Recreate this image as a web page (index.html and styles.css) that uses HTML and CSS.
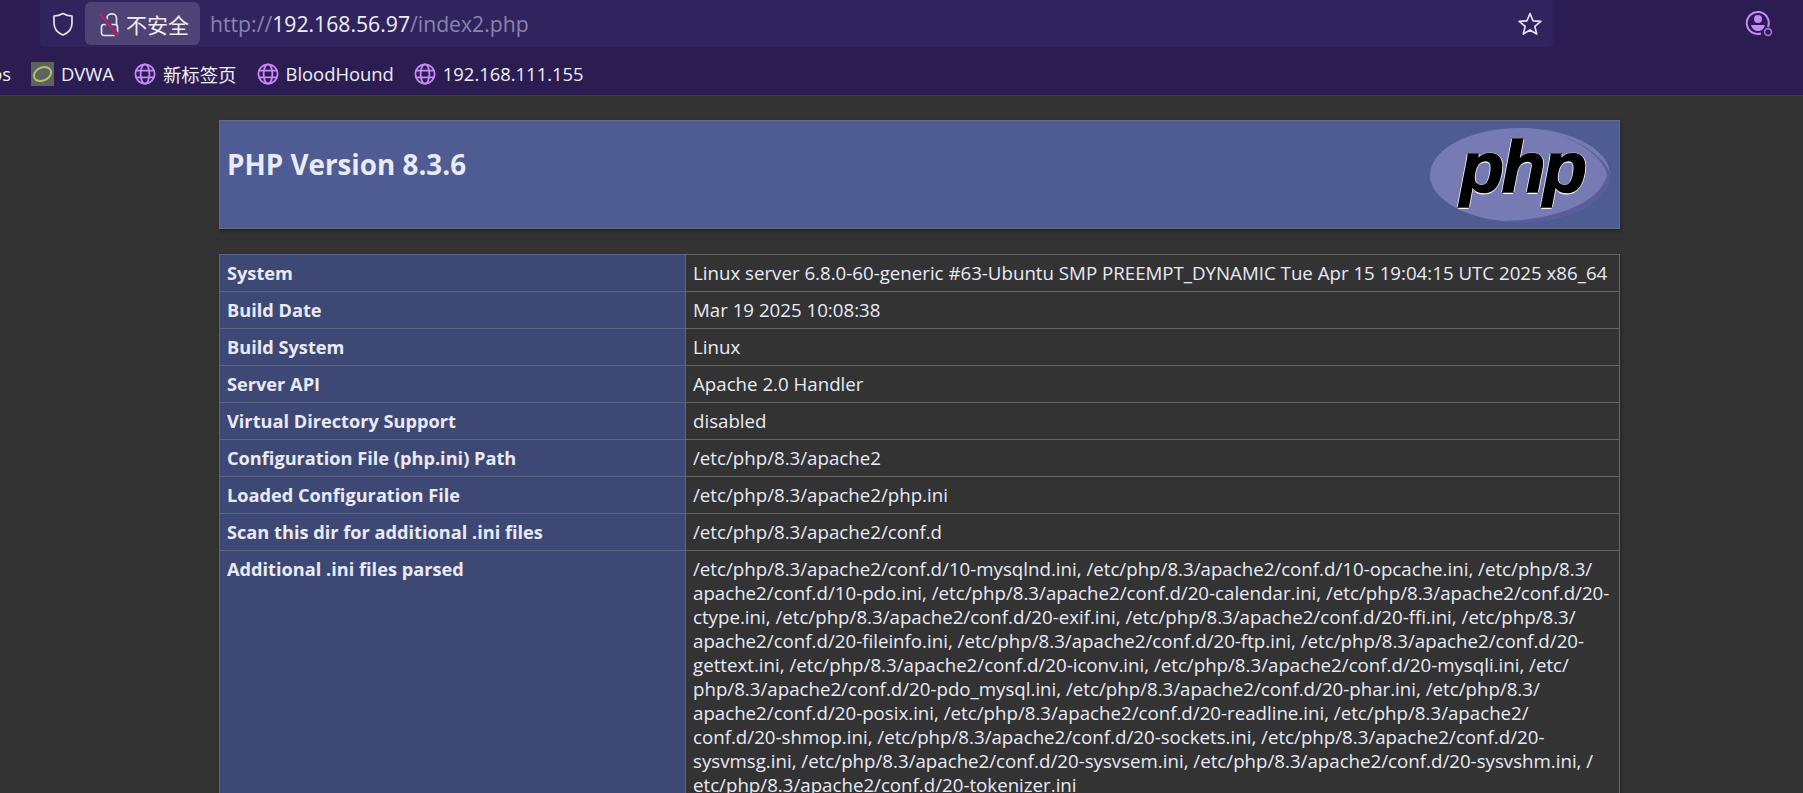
FILE: index.html
```html
<!DOCTYPE html>
<html lang="zh-CN">
<head>
  <meta charset="UTF-8" />
  <title>PHP 8.3.6 - phpinfo()</title>
  <link rel="stylesheet" href="styles.css">
</head>
<body>
  <div class="toolbar">
    <div class="nav-row">
      <div class="address">
        <svg class="shield" width="24" height="28" viewBox="0 0 24 28"><path d="M12 3.5 C14.5 5 18 6 21 6 V13 C21 19 17 23 12 25 C7 23 3 19 3 13 V6 C6 6 9.5 5 12 3.5 Z" fill="none" stroke="#e6e2f4" stroke-width="1.7" stroke-linejoin="round"/></svg>
        <div class="not-secure">
          <svg width="21" height="26" viewBox="0 0 21 26"><path d="M8 14 V7 C8 1.5 17.5 1.5 17.5 7 V14" fill="none" stroke="#e6e2f4" stroke-width="1.7"/><rect x="2.5" y="13.5" width="16" height="11" rx="2.5" fill="none" stroke="#e6e2f4" stroke-width="1.7"/><path d="M1 3 L19 25" stroke="#4f4375" stroke-width="4.5"/><path d="M1 3 L19 25" stroke="#e0144c" stroke-width="1.6"/></svg>
          <span>不安全</span>
        </div>
        <div class="url">http://<b>192.168.56.97</b>/index2.php</div>
        <svg class="star" width="26" height="26" viewBox="0 0 26 26"><path d="M13 2.5 L16 9.8 L23.8 10.4 L17.8 15.4 L19.7 23 L13 18.9 L6.3 23 L8.2 15.4 L2.2 10.4 L10 9.8 Z" fill="none" stroke="#e6e2f4" stroke-width="1.7" stroke-linejoin="round"/></svg>
      </div>
      <svg class="account" width="30" height="30" viewBox="0 0 30 30"><path d="M24 19 A11 11 0 1 0 17 25.5" fill="none" stroke="#c58af5" stroke-width="2"/><circle cx="14" cy="11" r="4" fill="#c58af5"/><path d="M7 17 H21 C20 21 17 23 14 23 C11 23 8 21 7 17 Z" fill="#c58af5"/><circle cx="24" cy="24" r="3.4" fill="none" stroke="#a774dd" stroke-width="1.6"/></svg>
    </div>
    <div class="bookmarks">
      <span class="cut">os</span>
      <span class="bm"><svg width="23" height="24" viewBox="0 0 23 24"><rect width="23" height="24" fill="#5d6360"/><ellipse cx="11.5" cy="12" rx="9" ry="6.5" transform="rotate(-25 11.5 12)" fill="none" stroke="#b4c06a" stroke-width="2"/></svg>DVWA</span>
      <span class="bm"><svg class="globe" width="22" height="22" viewBox="0 0 22 22"><use href="#globe"/></svg>新标签页</span>
      <span class="bm"><svg class="globe" width="22" height="22" viewBox="0 0 22 22"><use href="#globe"/></svg>BloodHound</span>
      <span class="bm"><svg class="globe" width="22" height="22" viewBox="0 0 22 22"><use href="#globe"/></svg>192.168.111.155</span>
    </div>
    <svg width="0" height="0" class="defs"><defs><g id="globe" fill="none" stroke="#c58af5" stroke-width="1.8"><circle cx="11" cy="11" r="9.6"/><ellipse cx="11" cy="11" rx="4.4" ry="9.6"/><path d="M2 7.6 H20 M2 14.4 H20"/></g></defs></svg>
  </div>

  <div class="center">
    <div class="php-head">
      <div class="php-logo">
        <svg width="180" height="96" viewBox="0 0 180 96"><ellipse cx="90" cy="48" rx="90" ry="47" fill="#777bb3"/><path d="M128 7 C160 18 180 38 180 48 C180 74 140 95 90 95 C84 95 79 95 74 94 C120 93 170 78 177 48 C175 32 150 15 128 7 Z" fill="#5a5c9c"/></svg>
        <span class="php-word">php</span>
      </div>
      <h1>PHP Version 8.3.6</h1>
    </div>

    <table>
      <tr><td class="e">System</td><td class="v">Linux server 6.8.0-60-generic #63-Ubuntu SMP PREEMPT_DYNAMIC Tue Apr 15 19:04:15 UTC 2025 x86_64</td></tr>
      <tr><td class="e">Build Date</td><td class="v">Mar 19 2025 10:08:38</td></tr>
      <tr><td class="e">Build System</td><td class="v">Linux</td></tr>
      <tr><td class="e">Server API</td><td class="v">Apache 2.0 Handler</td></tr>
      <tr><td class="e">Virtual Directory Support</td><td class="v">disabled</td></tr>
      <tr><td class="e">Configuration File (php.ini) Path</td><td class="v">/etc/php/8.3/apache2</td></tr>
      <tr><td class="e">Loaded Configuration File</td><td class="v">/etc/php/8.3/apache2/php.ini</td></tr>
      <tr><td class="e">Scan this dir for additional .ini files</td><td class="v">/etc/php/8.3/apache2/conf.d</td></tr>
      <tr><td class="e">Additional .ini files parsed</td><td class="v">/etc/php/8.3/apache2/conf.d/10-mysqlnd.ini, /etc/php/8.3/apache2/conf.d/10-opcache.ini, /etc/php/8.3/<br>apache2/conf.d/10-pdo.ini, /etc/php/8.3/apache2/conf.d/20-calendar.ini, /etc/php/8.3/apache2/conf.d/20-<br>ctype.ini, /etc/php/8.3/apache2/conf.d/20-exif.ini, /etc/php/8.3/apache2/conf.d/20-ffi.ini, /etc/php/8.3/<br>apache2/conf.d/20-fileinfo.ini, /etc/php/8.3/apache2/conf.d/20-ftp.ini, /etc/php/8.3/apache2/conf.d/20-<br>gettext.ini, /etc/php/8.3/apache2/conf.d/20-iconv.ini, /etc/php/8.3/apache2/conf.d/20-mysqli.ini, /etc/<br>php/8.3/apache2/conf.d/20-pdo_mysql.ini, /etc/php/8.3/apache2/conf.d/20-phar.ini, /etc/php/8.3/<br>apache2/conf.d/20-posix.ini, /etc/php/8.3/apache2/conf.d/20-readline.ini, /etc/php/8.3/apache2/<br>conf.d/20-shmop.ini, /etc/php/8.3/apache2/conf.d/20-sockets.ini, /etc/php/8.3/apache2/conf.d/20-<br>sysvmsg.ini, /etc/php/8.3/apache2/conf.d/20-sysvsem.ini, /etc/php/8.3/apache2/conf.d/20-sysvshm.ini, /<br>etc/php/8.3/apache2/conf.d/20-tokenizer.ini</td></tr>
    </table>
  </div>
</body>
</html>
```

FILE: styles.css
```css
html, body {
  height: 100%;
  overflow: hidden;
}
body {
  margin: 0;
  background-color: #333;
  color: #e8eaf6;
  font-family: "Open Sans", "Noto Sans CJK SC", sans-serif;
  font-size: 18.7px;
}
.toolbar {
  height: 95px;
  background-color: #2b1d52;
  border-bottom: 1px solid #3f3478;
}
.nav-row {
  display: flex;
  align-items: flex-start;
  height: 47px;
  padding-left: 40px;
}
.address {
  display: flex;
  align-items: center;
  width: 1513px;
  height: 47px;
  background-color: #30245e;
  border-radius: 0 0 6px 6px;
}
.shield {
  margin-left: 11px;
}
.not-secure {
  display: flex;
  align-items: center;
  gap: 6px;
  height: 43px;
  margin-left: 10px;
  padding: 0 11px 0 14px;
  background-color: #4f4375;
  border-radius: 6px;
  color: #f0eef8;
  font-size: 21px;
}
.url {
  flex: 1;
  margin-left: 10px;
  color: #8b84ad;
  font-size: 21.2px;
}
.url b {
  color: #f0eef8;
  font-weight: normal;
}
.star {
  margin-right: 10px;
}
.account {
  margin: 8px 0 0 191px;
}
.bookmarks {
  display: flex;
  align-items: center;
  height: 53px;
  gap: 20px;
  color: #f0eef8;
  font-size: 18.4px;
}
.cut {
  width: 11px;
  overflow: hidden;
  direction: rtl;
}
.bm {
  display: flex;
  align-items: center;
  gap: 7px;
}
.bm:first-of-type {
  margin-left: -2px;
}
.defs {
  position: absolute;
}
.center {
  width: 1401px;
  margin: 24px 0 0 219px;
}
.php-head {
  height: 107px;
  margin-bottom: 25px;
  padding: 0 7px;
  background-color: #4f5b93;
  border: 1px solid #666b8a;
  box-shadow: 1px 2px 3px #222;
}
.php-logo {
  position: relative;
  float: right;
  width: 180px;
  height: 96px;
  margin: 6px 2px 0 0;
}
.php-word {
  position: absolute;
  left: 30px;
  top: -2px;
  color: #000;
  font-family: "Liberation Sans", sans-serif;
  font-size: 72px;
  font-style: italic;
  font-weight: bold;
  line-height: 84px;
  letter-spacing: -2.5px;
  -webkit-text-stroke: 1.5px #000;
  text-shadow: 1.5px 0 #fff, -1.5px 0 #fff, 0 1.5px #fff, 0 -1.5px #fff;
}
h1 {
  margin: 0;
  padding-top: 27px;
  font-size: 27.8px;
  font-weight: 700;
  line-height: 32px;
}
table {
  width: 1401px;
  border-collapse: collapse;
  box-shadow: 1px 2px 3px #222;
  table-layout: fixed;
}
td {
  height: 37px;
  padding: 0 7px;
  border: 1px solid #666;
  vertical-align: middle;
  line-height: 24px;
  box-sizing: border-box;
}
.e {
  width: 466px;
  background-color: #3e4874;
  border-color: #5d6488;
  font-size: 18.2px;
  font-weight: 700;
}
tr:last-child .e {
  vertical-align: top;
  padding-top: 6px;
}
.v {
  background-color: #333;
  white-space: nowrap;
}
tr:last-child .v {
  padding: 6px 7px;
}
```
